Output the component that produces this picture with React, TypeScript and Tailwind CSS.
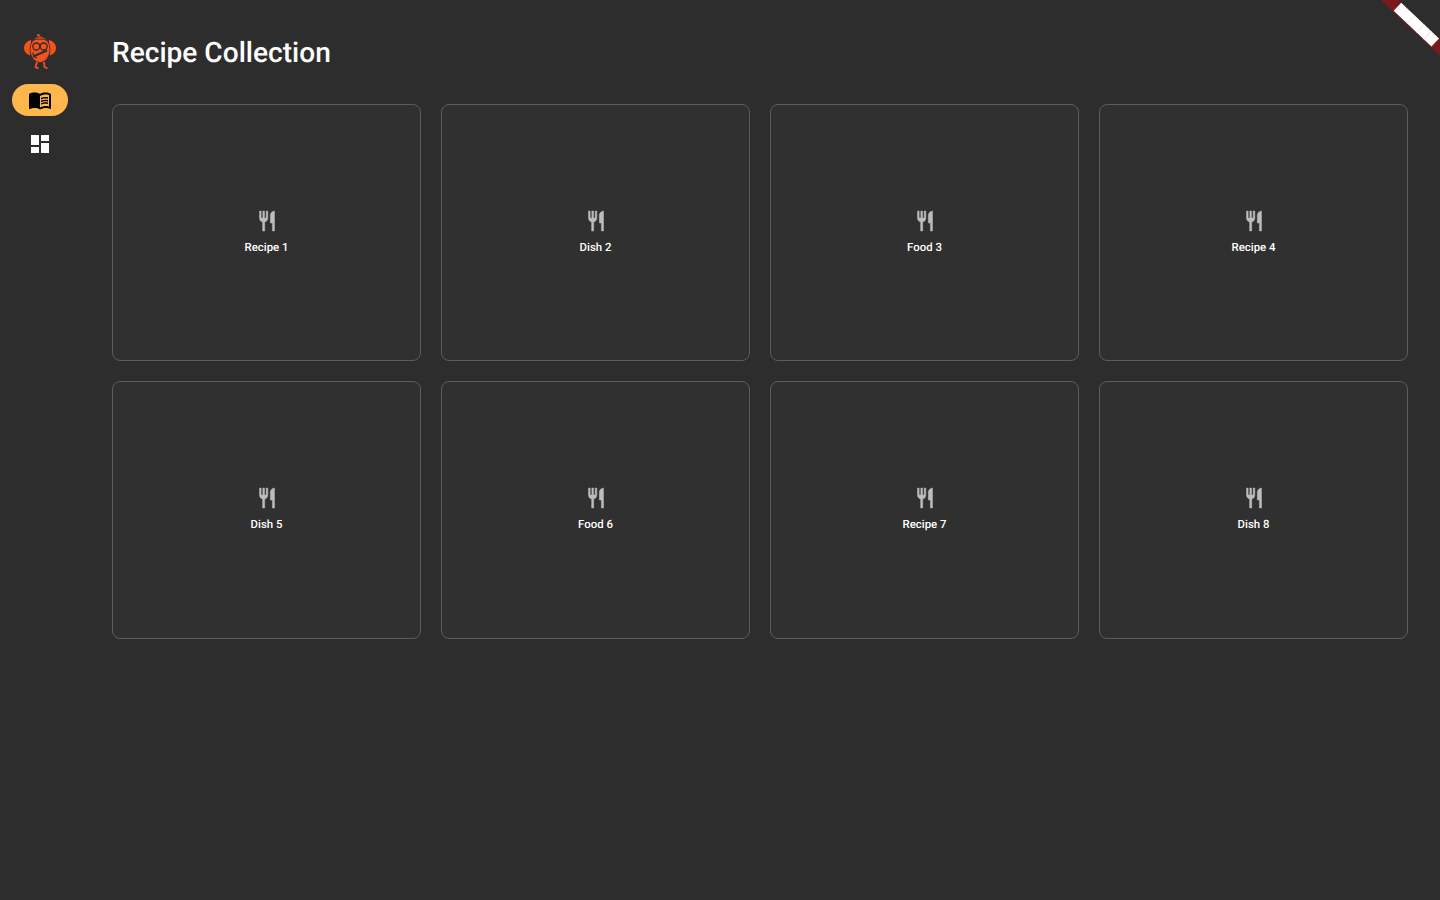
const restaurant = "M11 9H9V2H7v7H5V2H3v7c0 2.12 1.66 3.84 3.75 3.97V22h2.5v-9.03C11.34 12.84 13 11.12 13 9V2h-2v7zm5-3v8h2.5v8H21V2c-2.76 0-5 2.24-5 4z";
const items = ["Recipe 1", "Dish 2", "Food 3", "Recipe 4", "Dish 5", "Food 6", "Recipe 7", "Dish 8"];

function Logo() {
  return (
    <svg width="36" height="40" viewBox="0 0 36 40" fill="none">
      {/* hair tuft */}
      <path d="M16 6l-1.500-3 3 .5 2 2.500z" fill="#f4511e" />
      {/* ears */}
      <path d="M9 9C4.500 10 2 13.500 2 17s2 6 6 7.500c1.500-5 1.500-10.500 1-15.500z" fill="#f4511e" />
      <path d="M27 9c4.500 1 7 4.500 7 8s-2 6-6 7.500c-1.500-5-1.500-10.500-1-15.500z" fill="#f4511e" />
      {/* head and body */}
      <ellipse cx="18" cy="18.500" rx="10" ry="13" fill="#f4511e" stroke="#2d2d2d" strokeWidth="0.800" />
      {/* spectacles */}
      <circle cx="14.300" cy="15.500" r="3.500" fill="#f4511e" stroke="#2d2d2d" strokeWidth="1.300" />
      <circle cx="21.700" cy="15.500" r="3.500" fill="#f4511e" stroke="#2d2d2d" strokeWidth="1.300" />
      <path d="M11 9.500c3-2 10-2 14 0" stroke="#2d2d2d" strokeWidth="1" />
      {/* beak slash */}
      <path d="M11 25.500l14-6" stroke="#2d2d2d" strokeWidth="2" />
      <path d="M11 21.500c0 3 1.500 5 4 5.500" stroke="#2d2d2d" strokeWidth="1.200" />
      {/* legs */}
      <path d="M15 31l-1.500 5 3 1.500M22 31l.5 5 3 1.500" stroke="#f4511e" strokeWidth="1.800" />
    </svg>
  );
}

export default function App() {
  return (
    <div className="relative flex min-h-[900px] overflow-hidden bg-[#2d2d2d] font-['Roboto',sans-serif] text-white [text-rendering:geometricPrecision]">
      <nav className="flex w-20 shrink-0 flex-col items-center pt-[31px]">
        <Logo />
        <div className="mt-[13px] flex h-8 w-14 items-center justify-center rounded-full bg-[#ffb74d]">
          <svg width="24" height="24" viewBox="0 0 24 24" fill="#000">
            <path d="M21 5c-1.11-.35-2.33-.5-3.5-.5-1.95 0-4.05.4-5.500 1.500-1.450-1.100-3.550-1.500-5.500-1.500S2.450 4.900 1 6v14.650c0 .25.25.5.5.5.1 0 .15-.05.25-.05C3.100 20.450 5.050 20 6.500 20c1.950 0 4.050.4 5.500 1.500 1.350-.85 3.800-1.500 5.500-1.500 1.650 0 3.350.3 4.750 1.050.1.05.15.05.25.05.25 0 .5-.25.5-.5V6c-.6-.45-1.250-.75-2-1zm0 13.500c-1.100-.35-2.300-.5-3.500-.5-1.700 0-4.150.65-5.500 1.500V8c1.350-.85 3.800-1.500 5.500-1.500 1.200 0 2.400.15 3.500.5v11.500z" />
            <path d="M17.500 10.500c.88 0 1.730.09 2.500.26V9.240c-.79-.15-1.640-.24-2.500-.24-1.700 0-3.240.29-4.500.83v1.660c1.130-.64 2.700-.99 4.500-.99zM13 12.490v1.660c1.130-.64 2.700-.99 4.500-.99.88 0 1.730.09 2.500.26V11.900c-.79-.15-1.640-.24-2.500-.24-1.700 0-3.240.3-4.500.83zM17.500 14.330c-1.700 0-3.240.29-4.500.83v1.660c1.130-.64 2.700-.99 4.500-.99.88 0 1.730.09 2.500.26v-1.520c-.79-.16-1.640-.24-2.500-.24z" />
          </svg>
        </div>
        <div className="mt-3 flex h-8 w-14 items-center justify-center">
          <svg width="24" height="24" viewBox="0 0 24 24" fill="#fff">
            <path d="M3 13h8V3H3v10zm0 8h8v-6H3v6zm10 0h8V11h-8v10zm0-18v6h8V3h-8z" />
          </svg>
        </div>
      </nav>
      <main className="flex-1 pl-8 pr-8 pt-[33px]">
        <h1 className="h-10 text-[28.100px] leading-10 font-medium">Recipe Collection</h1>
        <div className="mt-[31px] grid grid-cols-4 gap-5">
          {items.map((name) => (
            <div key={name} className="flex h-[257.250px] flex-col items-center justify-center rounded-lg border border-[#5c5c5c] bg-[#303030]">
              <svg width="20" height="24" viewBox="0 0 24 24" fill="#bdbdbd" preserveAspectRatio="none">
                <path d={restaurant} stroke="#bdbdbd" strokeWidth="0.500" />
              </svg>
              <div className="mt-[6px] mb-[1px] text-[11.400px] leading-4 font-medium">{name}</div>
            </div>
          ))}
        </div>
      </main>
      <div className="absolute left-[1365.500px] top-[19px] flex h-[12px] w-[100px] rotate-[43.400deg] items-start justify-center bg-[#7b1a1a]">
        <div className="flex h-[10.500px] w-[52px] bg-white">
          <div className="w-[18px]" />
          <div className="w-[13px] border-l border-[#f3e4e4]" />
          <div className="w-[10px] border-l border-[#f3e4e4]" />
          <div className="flex-1 border-l border-[#f3e4e4]" />
        </div>
      </div>
    </div>
  );
}
